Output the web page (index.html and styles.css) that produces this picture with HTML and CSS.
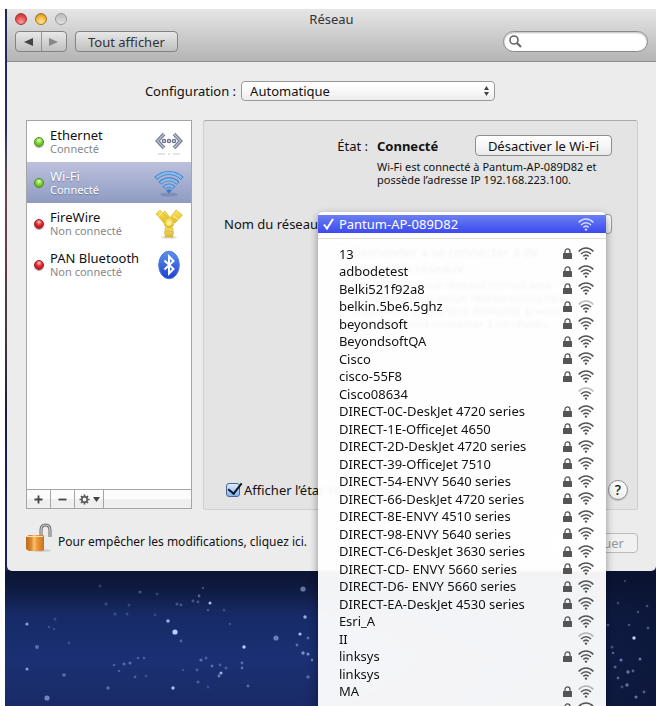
FILE: index.html
```html
<!DOCTYPE html>
<html lang="fr">
<head>
<meta charset="utf-8">
<title>Réseau</title>
<meta name="viewport" content="width=device-width, initial-scale=1">
<link rel="stylesheet" href="styles.css">
<script src="app.js" defer></script>
</head>
<body>
<svg class="defs" aria-hidden="true">
  <defs>
    <symbol id="wifi" viewBox="0 0 16 13">
      <g fill="none" stroke="currentColor" stroke-width="1.5">
        <path d="M.6 4.4C5-.2 11-.2 15.4 4.4"/>
        <path d="M3 7C6 3.9 10 3.9 13 7"/>
        <path d="M5.3 9.4C7 7.7 9 7.7 10.7 9.4"/>
      </g>
      <circle cx="8" cy="11.6" r="1.2" fill="currentColor"/>
    </symbol>
    <symbol id="wifi-weak" viewBox="0 0 16 13">
      <g fill="none" stroke="currentColor" stroke-width="1.5">
        <path opacity=".4" d="M.6 4.4C5-.2 11-.2 15.4 4.4"/>
        <path d="M3 7C6 3.9 10 3.9 13 7"/>
        <path d="M5.3 9.4C7 7.7 9 7.7 10.7 9.4"/>
      </g>
      <circle cx="8" cy="11.6" r="1.2" fill="currentColor"/>
    </symbol>
    <symbol id="lock" viewBox="0 0 9 11">
      <path d="M2 5.5V3.4a2.5 2.5 0 0 1 5 0v2.1" fill="none" stroke="currentColor" stroke-width="1.3"/>
      <rect y="5" width="9" height="6" rx=".6" fill="currentColor"/>
    </symbol>
    <linearGradient id="yellow" x2="0" y2="1"><stop stop-color="#fbe45c"/><stop offset="1" stop-color="#e3bb22"/></linearGradient>
    <linearGradient id="bt" x2="0" y2="1"><stop stop-color="#5c93ec"/><stop offset="1" stop-color="#1f3fd0"/></linearGradient>
    <linearGradient id="brass" x2="1" y2="0"><stop stop-color="#b9691c"/><stop offset=".3" stop-color="#dd8a30"/><stop offset=".45" stop-color="#fbc171"/><stop offset=".6" stop-color="#ef9c3d"/><stop offset="1" stop-color="#c6721c"/></linearGradient>
  </defs>
</svg>
<main class="desktop">
  <svg class="stars" id="stars" viewBox="0 0 651 136" preserveAspectRatio="xMinYMin slice" aria-hidden="true"></svg>
  <section class="window">
    <header class="head">
      <div class="titlebar">
        <div class="lights">
          <button class="light red" aria-label="Fermer"></button>
          <button class="light amber" aria-label="Réduire"></button>
          <button class="light gray" aria-label="Agrandir"></button>
        </div>
        <h1>Réseau</h1>
      </div>
      <div class="tools">
        <div class="nav">
          <button aria-label="Précédent"><svg width="9" height="8" viewBox="0 0 9 8"><path d="M0 4 9 0v8z" fill="#444"/></svg></button>
          <button aria-label="Suivant"><svg width="9" height="8" viewBox="0 0 9 8"><path d="M9 4 0 0v8z" fill="#888"/></svg></button>
        </div>
        <button class="show-all">Tout afficher</button>
        <label class="search">
          <svg width="13" height="13" viewBox="0 0 13 13"><circle cx="5" cy="5" r="4" fill="none" stroke="#666" stroke-width="1.6"/><path d="m8 8 4 4" stroke="#666" stroke-width="2.2"/></svg>
          <input type="search" aria-label="Rechercher">
        </label>
      </div>
    </header>

    <div class="content">
      <div class="config">
        <label for="location">Configuration :</label>
        <div class="select location">
          <select id="location"><option>Automatique</option></select>
          <svg class="arrows" width="5" height="10" viewBox="0 0 5 10"><path d="M2.5 0 5 4H0zM0 6h5L2.5 10z" fill="#444"/></svg>
        </div>
      </div>

      <div class="panes">
        <aside class="sidebar">
          <ul class="services">
            <li><button class="service"><i class="dot on"></i><span class="name">Ethernet<small>Connecté</small></span>
              <svg width="30" height="30" viewBox="0 0 30 30"><g fill="none" stroke="#787f94" stroke-width="3.6"><path d="M10 7 3.500 14 10 21"/><path d="m20 7 6.500 7-6.500 7"/></g><g fill="none" stroke="#b9bfce" stroke-width="1.200"><path d="M10 7 3.500 14 10 21"/><path d="m20 7 6.500 7-6.500 7"/></g><g fill="#dfe3ee" stroke="#68708a" stroke-width="1.300"><circle cx="10" cy="14" r="1.600"/><circle cx="15" cy="14" r="1.600"/><circle cx="20" cy="14" r="1.600"/></g><path d="M4 27h7M14 27h2M19 27h7" stroke="#ddd" stroke-width="1.500"/></svg></button></li>
            <li><button class="service selected"><i class="dot on"></i><span class="name">Wi-Fi<small>Connecté</small></span>
              <svg width="30" height="30" viewBox="0 0 30 30"><ellipse cx="15" cy="26.500" rx="9" ry="2" fill="#5f6d99" opacity=".4"/><g fill="none" stroke="#3f7cc6" stroke-width="4"><path d="M1.800 10.500C9 3 21 3 28.200 10.500"/><path d="M6 15.300C11 10 19 10 24 15.300"/><path d="M10 19.800C13 16.700 17 16.700 20 19.800"/></g><g fill="none" stroke="#83b9ec" stroke-width="2.500"><path d="M2.400 10.200C9.300 3.300 20.700 3.300 27.600 10.200"/><path d="M6.600 15C11.300 10.300 18.700 10.300 23.400 15"/><path d="M10.600 19.500C13.300 17 16.700 17 19.400 19.500"/></g><path d="M12 22.500q3-2.500 6 0L15 25.500z" fill="#3f7cc6"/></svg></button></li>
            <li><button class="service"><i class="dot off"></i><span class="name">FireWire<small>Non connecté</small></span>
              <svg width="30" height="30" viewBox="0 0 30 30"><ellipse cx="15" cy="28.500" rx="8" ry="1.300" fill="#ddd"/><g fill="url(#yellow)" stroke="#d0a92a" stroke-width=".6"><path d="m7.500 5 3.500-3 4.500 6-4 3z"/><path d="m2 5 4-4 8 9-4 4z"/><path d="m16 9 6-8 6.500 5-7.500 8z"/><circle cx="15" cy="14" r="5"/><path d="M11 19h8v2.500h-8zM10.500 22.500h9v2h-9zM11 25.500h8V28h-8z"/></g><path d="m4.500 7.500 4-4M19 6.500l5 4" stroke="#fff7b8" stroke-width="1"/><circle cx="15" cy="14" r="2.500" fill="#fff09a"/></svg></button></li>
            <li><button class="service"><i class="dot off"></i><span class="name">PAN Bluetooth<small>Non connecté</small></span>
              <svg width="30" height="30" viewBox="0 0 30 30"><ellipse cx="15" cy="15" rx="10.300" ry="13.800" fill="url(#bt)" stroke="#5078d6"/><path d="m10.500 10.500 9 8.500-4.500 4.500v-17l4.500 4.500-9 8.500" fill="none" stroke="#fff" stroke-width="2"/></svg></button></li>
          </ul>
          <div class="actions">
            <button aria-label="Ajouter"><svg width="9" height="9" viewBox="0 0 9 9"><path d="M4.500 .5v8M.5 4.500h8" stroke="#444" stroke-width="1.800"/></svg></button>
            <button aria-label="Supprimer"><svg width="9" height="9" viewBox="0 0 9 9"><path d="M.5 4.500h8" stroke="#444" stroke-width="1.800"/></svg></button>
            <button aria-label="Options"><svg width="21" height="11" viewBox="0 0 21 11"><g stroke="#555" stroke-width="1.700"><path d="M5.500 .5v10M.5 5.500h10M2 2l7 7M9 2 2 9"/></g><circle cx="5.500" cy="5.500" r="2.700" fill="#f2f2f2" stroke="#555" stroke-width="1.500"/><path d="M14 3h7l-3.500 5z" fill="#444"/></svg></button>
          </div>
        </aside>

        <section class="panel">
          <div class="status">
            <span class="key">État :</span>
            <strong>Connecté</strong>
            <button class="push">Désactiver le Wi-Fi</button>
            <p>Wi-Fi est connecté à Pantum-AP-089D82 et possède l’adresse IP 192.168.223.100.</p>
          </div>
          <div class="network">
            <label for="ssid">Nom du réseau :</label>
            <div class="select ssid">
              <select id="ssid"><option>Pantum-AP-089D82</option></select>
              <div class="menu">
                <button class="current"><svg class="check" width="11" height="12" viewBox="0 0 11 12"><path d="m1 6.500 3 4L10 1" fill="none" stroke="#fff" stroke-width="2"/></svg><span>Pantum-AP-089D82</span><svg class="wifi" width="16" height="13"><use href="#wifi"/></svg></button>
                <hr>
                <ul id="networks"></ul>
              </div>
            </div>
          </div>
          <div class="ask">
            <input type="checkbox" id="ask">
            <label for="ask">Demander à se connecter à de nouveaux réseaux.</label>
            <p>La connexion aux réseaux connus sera automatique. Si aucun réseau connu n’est disponible, il vous sera demandé si vous souhaitez vous connecter à un réseau.</p>
          </div>
          <div class="bottom">
            <input type="checkbox" id="show" checked>
            <label for="show">Afficher l’état Wi-Fi dans la barre</label>
            <button class="help" aria-label="Aide">?</button>
          </div>
        </section>
      </div>

      <footer class="foot">
        <button class="padlock" aria-label="Verrouiller"><svg width="26" height="29" viewBox="0 0 26 29"><path d="M15 14V7q0-5 4.500-5T24 7v7" fill="none" stroke="#666" stroke-width="3"/><path d="M15 14V7q0-5 4.500-5T24 7v7" fill="none" stroke="#d4d4d4" stroke-width="1.200"/><ellipse cx="15" cy="27.500" rx="10" ry="1.300" fill="#ccc"/><path d="m0 14 3-2h14l1 1v14l-2 1H3l-3-2z" fill="url(#brass)"/><path d="M1 13.500h16" stroke="#ffe0ad" stroke-width="1"/></svg></button>
        <span>Pour empêcher les modifications, cliquez ici.</span>
        <button class="apply" disabled>Appliquer</button>
      </footer>
    </div>
  </section>
</main>
</body>
</html>
```
FILE: styles.css
```css
* { box-sizing: border-box; }

body {
  margin: 0;
  padding: 9px 3px 0 5px;
  background: #fff;
  color: #111;
  font: 13px/18px "Noto Sans", "Open Sans", sans-serif;
}

button, input, select { margin: 0; font: inherit; color: inherit; }
button { padding: 0; border: 0; background: none; }
ul { margin: 0; padding: 0; list-style: none; }
p, h1 { margin: 0; }
svg { display: block; flex: none; }
.defs { position: absolute; width: 0; height: 0; }

.desktop {
  position: relative;
  height: calc(100vh - 9px);
  padding-left: 2px;
  overflow: hidden;
  background: linear-gradient(#1b2a52 0, #1f2f60 120px, #4a4458 150px, #6b4550 190px, #4a3440 330px, #1c1c38 400px, #122150 460px, #162454 562px, #101e47 565px, #172b68 610px, #1b3073 650px, #192a66 100%);
}
.stars {
  position: absolute;
  top: 562px;
  left: 0;
  width: 100%;
  height: 136px;
  background: linear-gradient(90deg, #0a123000 0, #0a123000 45%, #0a1230cc 100%), linear-gradient(#0a1330dd, #0a133000 40px);
}

.window {
  position: relative;
  border-radius: 5px;
  background: #ececec;
}
.head {
  padding: 1px 8px 9px;
  border-bottom: 1px solid #8e8e8e;
  background: linear-gradient(#e6e6e6, #b4b4b4);
}
.titlebar { display: flex; align-items: center; height: 18px; margin-bottom: 3px; }
.titlebar h1 { flex: 1; padding-right: 54px; text-align: center; font-size: 13px; font-weight: 400; color: #333; }
.lights { display: flex; gap: 8px; width: 54px; }
.light { width: 12px; height: 12px; border-radius: 50%; border: 1px solid #7d7d7d; }
.red { border-color: #9b3a3a; background: radial-gradient(circle at 50% 80%, #ff9c95, #e2484a 60%, #a82d30); }
.amber { border-color: #a97522; background: radial-gradient(circle at 50% 80%, #ffe98f, #efb43a 60%, #b67a1b); }
.gray { border-color: #999; background: linear-gradient(#bbb, #e2e2e2); }

.tools { display: flex; gap: 8px; height: 21px; }
.nav, .show-all {
  border: 1px solid #838383;
  border-radius: 4px;
  background: linear-gradient(#e8e8e8, #c0c0c0);
  color: #333;
}
.nav { display: flex; width: 52px; }
.nav button { flex: 1; display: grid; place-items: center; }
.nav button + button { border-left: 1px solid #949494; }
.show-all { padding: 0 12px; }
.search {
  display: flex;
  align-items: center;
  width: 145px;
  margin-left: auto;
  padding: 0 5px;
  border: 1px solid #8a8a8a;
  border-radius: 11px;
  background: #fff;
  box-shadow: inset 0 1px 2px #bbb;
}
.search input { flex: 1; min-width: 0; border: 0; background: none; outline: 0; }

.content { padding: 19px 18px 18px 19px; }
.config { display: flex; justify-content: center; align-items: center; gap: 5px; margin-bottom: 19px; padding-right: 24px; }
.select { position: relative; }
.location { width: 254px; }
.select select {
  display: block;
  width: 100%;
  height: 20px;
  padding: 0 8px;
  appearance: none;
  border: 1px solid #999;
  border-radius: 4px;
  background: linear-gradient(#fff, #f9f9f9 50%, #ededed);
  line-height: 18px;
}
.arrows { position: absolute; top: 5px; right: 6px; pointer-events: none; }

.panes { display: grid; grid-template-columns: 166px 1fr; gap: 11px; min-height: 390px; }
.sidebar { display: flex; flex-direction: column; margin-bottom: 1px; border: 1px solid #a5a5a5; background: #fff; }
.services { flex: 1; }
.service { display: flex; align-items: center; width: 100%; height: 41px; padding: 0 7px; text-align: left; }
.service.selected { background: linear-gradient(#bcc1dd, #8f9bc3); color: #fff; }
.selected .name { text-shadow: 0 1px 1px #6b77a0; }
.name { flex: 1; margin-left: 6px; line-height: 14px; }
.name small { display: block; font-size: 11px; line-height: 14px; color: #888; }
.selected small { color: #fff; }
.dot { width: 10px; height: 10px; border-radius: 50%; box-shadow: 0 1px 1px #aaa; }
.on { border: 1px solid #4a8a1c; background: radial-gradient(circle at 50% 30%, #e7ffc2, #7ed632 45%, #4aa31a); }
.off { border: 1px solid #9c1a20; background: radial-gradient(circle at 50% 25%, #ffc4c4, #e2262f 45%, #b3121c); }
.actions { display: flex; height: 19px; border-top: 1px solid #a5a5a5; background: linear-gradient(#fbfbfb 50%, #efefef 50%); }
.actions button { display: grid; place-items: center; width: 24px; border-right: 1px solid #a5a5a5; }
.actions button:last-child { width: 29px; }

.panel {
  display: flex;
  flex-direction: column;
  padding: 14px 25px 9px 20px;
  border: 1px solid #cfcfcf;
  border-top-color: #aaa;
  border-radius: 3px;
  background: #e4e4e4;
}
.status { display: grid; grid-template-columns: 144px 1fr auto; column-gap: 9px; row-gap: 4px; align-items: center; }
.key { text-align: right; }
.status strong { font-weight: 700; }
.status p { grid-column: 2 / 4; font-size: 11px; line-height: 13px; }
.push { height: 21px; padding: 0 12px; border: 1px solid #8f8f8f; border-radius: 4px; background: linear-gradient(#fff, #f6f6f6 50%, #e9e9e9); }
.network { display: flex; align-items: center; gap: 7px; margin-top: 28px; }
.ssid { flex: 1; }
.network label { white-space: nowrap; }

.menu {
  position: absolute;
  z-index: 2;
  top: -2px;
  left: -14px;
  right: 6px;
  padding: 3px 0;
  border-radius: 5px 5px 0 0;
  background: #fffffff3;
  box-shadow: 0 3px 9px #0006;
  backdrop-filter: blur(1px);
}
.menu button { display: flex; align-items: center; width: 100%; height: 18px; padding: 0 12px 0 21px; text-align: left; color: #111; }
.menu li:nth-child(odd) button { height: 17px; }
.menu span { flex: 1; white-space: nowrap; }
.menu .current { padding-left: 5px; color: #fff; background: linear-gradient(#6a80f2, #3d49f0); }
.check { margin-right: 5px; }
.menu hr { margin: 5px 0 6px; border: 0; border-top: 1px solid #ddd; }
.menu .wifi { margin-left: 6px; }
.menu li svg { color: #555; }
.menu .current .wifi { color: #d5dcff; }

.ask { display: grid; grid-template-columns: 14px 1fr; column-gap: 5px; row-gap: 2px; margin: 10px 20px 0 109px; line-height: 16px; }
.ask p { grid-column: 2; font-size: 11px; line-height: 13px; }
.bottom { display: flex; align-items: center; margin: auto -16px 0 2px; }
.bottom label { margin-left: 4px; }
input[type="checkbox"] { appearance: none; width: 14px; height: 14px; border: 1px solid #777; border-radius: 3px; background: linear-gradient(#fff, #e9e9e9); }
input[type="checkbox"]:checked {
  position: relative;
  border-color: #4e6790;
  background: linear-gradient(#dcecff, #82b4ec);
}
input[type="checkbox"]:checked::after {
  content: "";
  position: absolute;
  left: 4px;
  bottom: 2px;
  width: 6px;
  height: 12px;
  border: solid #0c1428;
  border-width: 0 2px 2px 0;
  transform: rotate(38deg);
}
.help { width: 20px; height: 20px; margin-left: auto; border: 1px solid #8f8f8f; border-radius: 50%; background: linear-gradient(#fff, #eee); font-size: 14px; font-weight: 500; line-height: 18px; box-shadow: 0 1px 1px #bbb; }

.foot { display: flex; align-items: center; height: 43px; }
.foot > span { flex: 1; padding: 21px 0 0 6px; font-size: 12px; }
.padlock { margin-top: 12px; }
.apply { height: 20px; margin-top: 23px; padding: 0 13px; border: 1px solid #bcbcbc; border-radius: 4px; background: #f1f1f1; color: #999; }
```
FILE: app.js
```js
// Each entry: network name, secured, weak signal.
const networks = [
  ["13", 1, 0], ["adbodetest", 1, 0], ["Belki521f92a8", 1, 0], ["belkin.5be6.5ghz", 1, 1],
  ["beyondsoft", 1, 0], ["BeyondsoftQA", 1, 0], ["Cisco", 1, 0], ["cisco-55F8", 1, 0],
  ["Cisco08634", 0, 1], ["DIRECT-0C-DeskJet 4720 series", 1, 0], ["DIRECT-1E-OfficeJet 4650", 1, 0],
  ["DIRECT-2D-DeskJet 4720 series", 1, 0], ["DIRECT-39-OfficeJet 7510", 1, 0],
  ["DIRECT-54-ENVY 5640 series", 1, 0], ["DIRECT-66-DeskJet 4720 series", 1, 0],
  ["DIRECT-8E-ENVY 4510 series", 1, 0], ["DIRECT-98-ENVY 5640 series", 1, 0],
  ["DIRECT-C6-DeskJet 3630 series", 1, 0], ["DIRECT-CD- ENVY 5660 series", 1, 0],
  ["DIRECT-D6- ENVY 5660 series", 1, 0], ["DIRECT-EA-DeskJet 4530 series", 1, 0],
  ["Esri_A", 1, 0], ["II", 0, 1], ["linksys", 1, 0], ["linksys", 0, 0], ["MA", 1, 1], ["", 1, 0]
];

document.getElementById("networks").innerHTML = networks.map(([name, secured, weak]) =>
  `<li><button><span>${name}</span>` +
  (secured ? '<svg width="9" height="11"><use href="#lock"/></svg>' : "") +
  `<svg class="wifi" width="16" height="13"><use href="#${weak ? "wifi-weak" : "wifi"}"/></svg></button></li>`
).join("");

// Each star: x, y, radius, opacity.
const stars = [
  [170, 61, 2.6, 1], [163, 50, 1.8, .8], [176, 70, 1.4, .35], [22, 53, 1.6, .7], [32, 76, 2, .4],
  [205, 32, 1.5, .9], [239, 76, 1.7, 1], [298, 18, 2.6, .5], [300, 46, 1.7, .8], [295, 63, 1.6, .9],
  [271, 67, 2.6, .5], [303, 67, 1.5, .4], [292, 74, 1.4, .4], [298, 82, 1.7, .6], [303, 83, 1.5, .6],
  [307, 89, 1.3, .5], [303, 106, 1.7, .4], [168, 117, 1.7, .9], [216, 102, 1.6, .8], [214, 105, 1.4, .5],
  [42, 127, 2.6, .55], [22, 98, 1.5, .7], [59, 104, 1.8, .4], [103, 117, 1.7, .4], [119, 93, 1.5, .4],
  [125, 92, 1.5, .4], [109, 94, 1.3, .3], [133, 87, 1.3, .3], [139, 87, 1.3, .3], [114, 100, 1.3, .3],
  [196, 89, 1.6, .4], [201, 87, 1.4, .3], [207, 95, 1.4, .4], [215, 94, 1.4, .3], [221, 97, 1.5, .3],
  [192, 99, 1.4, .3], [193, 111, 1.6, .3], [237, 92, 1.4, .4], [237, 97, 1.4, .4], [243, 115, 1.4, .4],
  [194, 25, 1.4, .4], [188, 30, 1.4, .3], [193, 31, 1.4, .3], [198, 17, 1.2, .3], [203, 39, 1.2, .3],
  [172, 33, 1.5, .3], [176, 34, 1.4, .3], [135, 21, 1.5, .3], [152, 23, 1.5, .2], [95, 15, 1.6, .2],
  [101, 33, 1.7, .2], [110, 43, 1.7, .2], [122, 43, 1.5, .2], [124, 34, 1.5, .2], [50, 48, 1.5, .2],
  [44, 56, 1.3, .2], [64, 72, 1.4, .2], [49, 58, 1.3, .2], [150, 44, 1.4, .2], [130, 106, 1.4, .3],
  [141, 105, 1.4, .2], [178, 99, 1.3, .2], [219, 39, 1.5, .2], [225, 53, 1.3, .2], [203, 116, 1.5, .2],
  [629, 67, 1.7, 1], [613, 32, 1.2, .3], [624, 54, 1.3, .3], [633, 41, 1.3, .3], [642, 35, 1.3, .3],
  [607, 76, 1.6, .3], [616, 89, 1.6, .5], [610, 96, 1.5, .4], [623, 101, 1.7, .5], [628, 100, 1.4, .4],
  [635, 88, 1.5, .5], [613, 107, 1.4, .4], [622, 114, 1.7, .5], [617, 116, 1.4, .3], [631, 126, 1.6, .5],
  [639, 121, 1.4, .4], [603, 54, 1.3, .4], [643, 57, 1.3, .4], [608, 82, 1.3, .4], [620, 10, 1.1, .3]
];

document.getElementById("stars").innerHTML = stars.map(([x, y, r, o]) =>
  `<circle cx="${x}" cy="${y}" r="${r}" fill="#b9d0ff" opacity="${o}"/>`
).join("");
```
